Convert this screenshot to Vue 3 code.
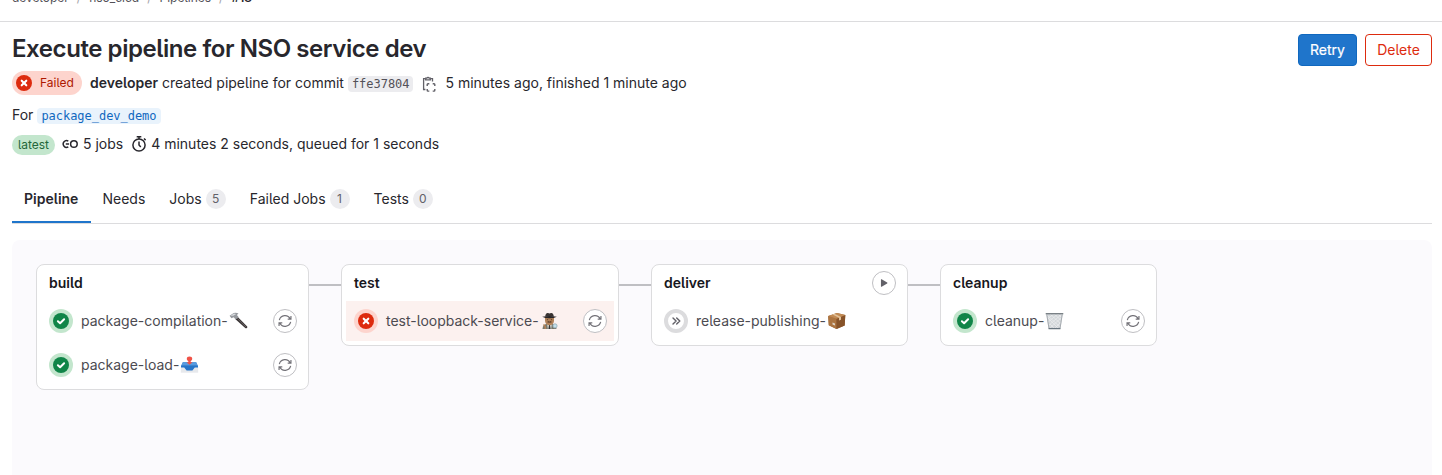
<script setup>
const crumbs = ['developer', 'nso_cicd', 'Pipelines', '#18']
const tabs = [
  { name: 'Pipeline', cls: 't-pipeline', active: true },
  { name: 'Needs', cls: 't-needs' },
  { name: 'Jobs', count: 5, cls: 't-jobs' },
  { name: 'Failed Jobs', count: 1, cls: 't-failed' },
  { name: 'Tests', count: 0, cls: 't-tests' },
]
const stages = [
  {
    name: 'build',
    jobs: [
      { name: 'package-compilation-', status: 'success', emoji: 'hammer', retry: true },
      { name: 'package-load-', status: 'success', emoji: 'inbox', retry: true },
    ],
  },
  { name: 'test', jobs: [{ name: 'test-loopback-service-', status: 'failed', emoji: 'detective', retry: true }] },
  { name: 'deliver', play: true, jobs: [{ name: 'release-publishing-', status: 'skipped', emoji: 'package' }] },
  { name: 'cleanup', jobs: [{ name: 'cleanup-', status: 'success', emoji: 'basket', retry: true }] },
]
</script>

<template>
  <div class="page">
    <nav class="crumbs">
      <template v-for="(c, i) in crumbs" :key="c">
        <span v-if="i" class="sep">/</span>
        <span :class="{ last: i === crumbs.length - 1 }">{{ c }}</span>
      </template>
    </nav>

    <header class="head">
      <div>
        <h1>Execute pipeline for NSO service dev</h1>
        <div class="row status-row">
          <span class="badge-failed">
            <svg width="16" height="16" viewBox="0 0 16 16"><circle cx="8" cy="8" r="8" fill="#dd2b0e" /><path d="M5.7 5.7l4.600 4.600M10.300 5.700l-4.600 4.600" stroke="#fff" stroke-width="2.1" stroke-linecap="round" /></svg>
            <span>Failed</span>
          </span>
          <b class="author">developer</b>
          <span class="created">created pipeline for commit</span>
          <code class="sha">ffe37804</code>
          <svg class="copy" width="16" height="16" viewBox="0 0 16 16" fill="none" stroke="#626168" stroke-width="1.300">
            <path d="M4.500 2.700H2.600v10.800h1.800M9.500 2.700h2v2.800" />
            <path d="M4.700 3.800V2.200h1.100a1.300 1.300 0 0 1 2.400 0h1.100v1.600z" />
            <path d="M6.200 9.900V8.600a.8.8 0 0 1 .8-.8h1.300M11.700 7.800H13a.8.8 0 0 1 .8.8v1.300M13.800 13v1.300a.8.8 0 0 1-.8.8h-1.300M8.300 15.100H7a.8.8 0 0 1-.8-.8V13" stroke-width="1.400" />
          </svg>
          <span class="ago">5 minutes ago, finished 1 minute ago</span>
        </div>
        <div class="row for-row"><span>For</span><code class="ref">package_dev_demo</code></div>
        <div class="row meta-row">
          <span class="latest">latest</span>
          <svg class="link" width="16" height="16" viewBox="0 0 16 16" fill="none" stroke="#28272d" stroke-width="1.5">
            <path d="M6.300 5.200A3.300 3.300 0 1 0 6.300 10.800M3.800 8H7" /><circle cx="11.900" cy="8" r="3.300" />
          </svg>
          <span class="jobs-count">5 jobs</span>
          <svg class="timer" width="16" height="16" viewBox="0 0 16 16" fill="none" stroke="#28272d" stroke-width="1.5">
            <circle cx="8" cy="9" r="6.1" /><path d="M5.7.8h4.6M8 1v2M8 5.6V9l1.8 2M13 2.5l1.6 1.6" />
          </svg>
          <span class="duration">4 minutes 2 seconds, queued for 1 seconds</span>
        </div>
      </div>
      <div class="actions">
        <button class="retry">Retry</button>
        <button class="delete">Delete</button>
      </div>
    </header>

    <div class="tabs">
      <div v-for="t in tabs" :key="t.name" class="tab" :class="[t.cls, { active: t.active }]">
        <span>{{ t.name }}</span>
        <span v-if="t.count !== undefined" class="count">{{ t.count }}</span>
      </div>
    </div>

    <main class="graph">
      <template v-for="(s, i) in stages" :key="s.name">
        <div v-if="i" class="wire"></div>
        <section class="stage" :class="s.name">
          <div class="stage-title">
            <b>{{ s.name }}</b>
            <span v-if="s.play" class="round"><svg width="14" height="14" viewBox="0 0 16 16"><path d="M4.500 4.200v7.600a.5.5 0 0 0 .8.4l6.300-3.700a.6.6 0 0 0 0-1L5.300 3.800a.5.5 0 0 0-.8.4z" fill="#626168" /></svg></span>
          </div>
          <div v-for="j in s.jobs" :key="j.name" class="job" :class="j.status">
            <svg class="state" width="24" height="24" viewBox="0 0 24 24" fill="none">
              <template v-if="j.status === 'success'">
                <circle cx="12" cy="12" r="12" fill="#c3e6cd" /><circle cx="12" cy="12" r="8" fill="#108548" />
                <path d="M8.900 12.200l2.200 2.100 4-4" stroke="#fff" stroke-width="2" stroke-linecap="round" stroke-linejoin="round" />
              </template>
              <template v-else-if="j.status === 'failed'">
                <circle cx="12" cy="12" r="12" fill="#fdd4cd" /><circle cx="12" cy="12" r="8" fill="#dd2b0e" />
                <path d="M9.700 9.700l4.600 4.600M14.300 9.700l-4.600 4.600" stroke="#fff" stroke-width="2.100" stroke-linecap="round" />
              </template>
              <template v-else>
                <circle cx="12" cy="12" r="10" fill="#fff" stroke="#dcdcde" stroke-width="4" />
                <path d="M9 8.900l3.100 3.100L9 15.100M12.700 8.900l3.100 3.100-3.100 3.100" stroke="#626168" stroke-width="1.400" stroke-linecap="round" stroke-linejoin="round" />
              </template>
            </svg>
            <span class="name">{{ j.name }}</span>
            <svg class="emoji" :class="j.emoji" width="19" height="18" viewBox="0 0 19 18">
              <template v-if="j.emoji === 'hammer'">
                <path d="M6.500 7.200l2.300-2.100 9.400 9.400q.5.8-.3 1.500-.9.7-1.700 0z" fill="#3a3536" />
                <path d="M8 6l9 9" stroke="#726b6b" stroke-width=".7" />
                <path d="M.6 3.800L4.700 1q2.500-.8 4.800.6L7.900 3l1.700 1.900-2.900 2.700-2-2.300-2.300.9z" fill="#96999e" />
                <path d="M1.400 3.700L5 1.600l2.200.3L4.300 3.800z" fill="#d7dade" />
              </template>
              <template v-else-if="j.emoji === 'inbox'">
                <path d="M3 6h13l2 5.500H1z" fill="#195aa6" />
                <path d="M.8 11h17.400v5.700H.8z" fill="#e7e9ec" />
                <path d="M1 9.200h17v2.300h-3.200L12.400 14.500H6.600l-2.400-3H1z" fill="#2775c8" />
                <path d="M3 6h13l2 3.500H1z" fill="#579bdf" />
                <path d="M8.300 4h2.400v2.300h1.900L9.500 8.800 6.400 6.300h1.900z" fill="#f05247" /><ellipse cx="9.500" cy="2.800" rx="2.700" ry="2.300" fill="#f05247" />
              </template>
              <template v-else-if="j.emoji === 'detective'">
                <path d="M2.500 17q.2-4.800 5-5.200h4q4.500.7 5 5.200z" fill="#77776a" />
                <path d="M7 11h5l-.8 6H7.900z" fill="#d9dad5" /><path d="M9 13h1l.6 4H8.400z" fill="#343434" />
                <path d="M5 5h9v4q-.7 4.300-4.500 4.300T5 9z" fill="#b18259" />
                <path d="M5.200 4.600q.4-4 2.800-3.600l1.500.5 1.500-.5q2.400-.4 2.800 3.600z" fill="#383332" />
                <path d="M2.200 4.700q7.300-1.300 14.600 0-2.700 1.600-7.300 1.600T2.200 4.700z" fill="#292628" />
                <path d="M7.300 9.800q1.200-.9 2.200-.1 1-.8 2.200.1l-.4.7H7.700z" fill="#4b3023" />
                <path d="M6.900 7.700h1.200M10.900 7.700h1.200" stroke="#4b3023" stroke-width=".8" />
                <path d="M3.500 12.500l1.800 2V17" stroke="#b28157" stroke-width="1.600" fill="none" />
                <circle cx="15" cy="13.900" r="2.100" fill="#c4e0eb" stroke="#91a9b5" stroke-width=".8" />
              </template>
              <template v-else-if="j.emoji === 'package'">
                <path d="M1.200 4L10 1l8.300 2-.6 10.500-8.200 3.500-7.700-3.800z" fill="#9b6739" />
                <path d="M1.200 4l8.300 2.800V17l-7.700-3.800z" fill="#ac7440" /><path d="M9.500 6.800L18.300 3l-.6 10.500L9.500 17z" fill="#875329" />
                <path d="M1.200 4L10 1l8.300 2-8.800 3.800z" fill="#c28b54" />
                <path d="M5.500 2.500l2-.7 6.500 3.100v2.900l-2 .8V5.700z" fill="#e2c39c" /><path d="M5.500 10.500l2.500 1v2l-2.500-1z" fill="#ddd2c3" />
              </template>
              <template v-else>
                <path d="M1.200 2h16.600l-2.400 15H3.600z" fill="#d3d7da" />
                <path d="M2 5l11 11M2 3l13 12M5 2l11 10M9 2l8 7M13 2l4 4M17 5L5 16M17 2L4 13M13 2L3 10M9 2L2 7M5 12l4 4M16 10l-6 6" stroke="#eceeef" stroke-width=".7" />
                <path d="M1.800 2.500L4 16.500M17.200 2.500L15 16.500" stroke="#a6abb0" />
                <path d="M.7 1.700h17.600" stroke="#737b80" stroke-width="1.300" /><path d="M3.600 16.600h11.800" stroke="#68757f" stroke-width="1.300" />
              </template>
            </svg>
            <span v-if="j.retry" class="round">
              <svg width="14" height="14" viewBox="0 0 16 16" fill="none" stroke="#737278" stroke-width="1.350">
                <path d="M1.500 6.900A6.700 6.700 0 0 1 14 5.600M14.800 2.200v3.700h-3.700M14.500 9.100A6.700 6.700 0 0 1 2 10.400M1.200 13.800v-3.700h3.700" />
              </svg>
            </span>
          </div>
        </section>
      </template>
    </main>
  </div>
</template>

<style>
body { margin: 0; background: #fff; overflow: hidden; }
</style>

<style scoped>
* { box-sizing: border-box; }
.page { height: 475px; overflow: hidden; display: flex; flex-direction: column; font: 14px/20px Inter, "Noto Sans", sans-serif; font-feature-settings: "cv05"; color: #28272d; }
svg { display: block; flex: none; }
span, b, code { white-space: nowrap; }
.crumbs { height: 22px; flex: none; border-bottom: 1px solid #dcdcde; padding-left: 12px; display: flex; font-size: 12px; line-height: 16px; color: #535158; }
.crumbs span { margin-top: -10px; }
.crumbs .sep { color: #a4a3a8; margin-left: 8px; margin-right: 8px; }
.crumbs .last { color: #28272d; font-weight: 600; }
.head { height: 158px; flex: none; padding: 12px 10px 0 12px; display: flex; justify-content: space-between; }
h1 { margin: 0; font-size: 24px; line-height: 30px; height: 34px; font-weight: 600; letter-spacing: -0.43px; white-space: nowrap; }
.row { display: flex; align-items: center; }
.status-row { height: 30px; }
.badge-failed { width: 70px; height: 24px; border-radius: 12px; background: #fdd4cd; color: #ae1800; display: flex; align-items: center; padding-left: 4px; gap: 8px; font-size: 12px; margin-right: 8px; }
.author { font-weight: 600; margin-right: 4px; }
code { font-family: "DejaVu Sans Mono", monospace; font-size: 12px; line-height: 15px; border-radius: 4px; padding: 1px 4px 0; letter-spacing: -0.03px; }
.sha { background: #ececef; color: #535158; margin-left: 4px; margin-top: 1px; }
.copy { margin-left: 8px; margin-top: 1px; }
.ago { margin-left: 8px; }
.for-row { height: 34px; }
.ref { margin-left: 4px; margin-top: 1px; background: #e9f3fc; color: #1068bf; }
.meta-row { height: 25px; }
.latest { height: 20px; width: 43px; border-radius: 10px; background: #c3e6cd; color: #24663b; font-size: 12px; text-align: center; }
.link { margin-left: 7px; margin-bottom: 1px; }
.jobs-count { margin-left: 5px; margin-bottom: 2px; }
.timer { margin-left: 8px; margin-bottom: 1px; }
.duration { margin-left: 4px; margin-bottom: 2px; }
.actions { display: flex; gap: 8px; align-items: flex-start; }
button { height: 32px; border-radius: 4px; font: 14px/16px Inter, sans-serif; font-feature-settings: "cv05"; padding: 0; }
.retry { width: 59px; background: #1f75cb; border: 1px solid #1068bf; color: #fff; -webkit-text-stroke: .2px; }
.delete { width: 67px; background: #fff; border: 1px solid #dd2b0e; color: #dd2b0e; }
.tabs { height: 44px; flex: none; margin: 0 10px 0 12px; border-bottom: 1px solid #dcdcde; display: flex; }
.tab { height: 43px; padding: 0 12px 6px; display: flex; align-items: center; gap: 4px; flex: none; }
.tab.active { width: 78.500px; font-weight: 600; border-bottom: 2px solid #1f75cb; padding-bottom: 4px; }
.count { height: 20px; min-width: 20px; text-align: center; border-radius: 10px; background: #ececef; color: #626168; font-size: 12px; }
.graph { flex: 1; margin: 16px 10px 0 12px; background: #fbfafd; border-radius: 8px 8px 0 0; padding: 24px; display: flex; align-items: flex-start; }
.stage { flex: none; background: #fff; border: 1px solid #dcdcde; border-radius: 8px; padding: 0 4px 4px; }
.stage.build { width: 273px; }
.stage.test { width: 278px; }
.stage.deliver { width: 257px; }
.stage.cleanup { width: 217px; }
.wire { width: 32px; height: 2px; background: #bfbfc3; margin-top: 20px; flex: none; }
.stage-title { height: 36px; padding: 0 7px 0 8px; display: flex; align-items: center; justify-content: space-between; color: #18171d; }
.stage-title b { font-weight: 600; }
.job { height: 40px; display: flex; align-items: center; padding: 0 7px 0 8px; color: #4c4b51; }
.job + .job { margin-top: 4px; }
.job.failed { background: #fcf1ef; margin: 0; }
.name { margin-left: 8px; }
.emoji { margin-left: 1px; }
.round { width: 24px; height: 24px; border: 1px solid #bfbfc3; border-radius: 50%; background: #fff; display: flex; align-items: center; justify-content: center; flex: none; }
.job .round { margin-left: auto; }
</style>
